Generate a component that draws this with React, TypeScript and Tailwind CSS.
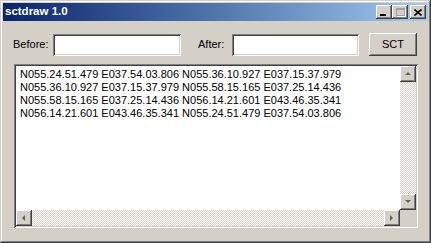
import React from "react";

const raised =
  "shadow-[inset_-1px_-1px_#404040,inset_1px_1px_#ffffff,inset_-2px_-2px_#808080,inset_2px_2px_#d4d0c8]";
const sunken =
  "shadow-[inset_1px_1px_#808080,inset_-1px_-1px_#ffffff,inset_2px_2px_#404040,inset_-2px_-2px_#d4d0c8]";

const lines = [
  "N055.24.51.479 E037.54.03.806 N055.36.10.927 E037.15.37.979",
  "N055.36.10.927 E037.15.37.979 N055.58.15.165 E037.25.14.436",
  "N055.58.15.165 E037.25.14.436 N056.14.21.601 E043.46.35.341",
  "N056.14.21.601 E043.46.35.341 N055.24.51.479 E037.54.03.806",
];

function Arrow({ dir }: { dir: "up" | "down" | "left" | "right" }) {
  const pts: Record<string, string> = {
    up: "1,5 4,2 7,5",
    down: "1,2 4,5 7,2",
    left: "5,1 2,4 5,7",
    right: "2,1 5,4 2,7",
  };
  return (
    <svg width="8" height="8" viewBox="0 0 8 8">
      <polygon points={pts[dir]} fill="#606060" />
    </svg>
  );
}

function ScrollBtn({ dir }: { dir: "up" | "down" | "left" | "right" }) {
  return (
    <div className={`w-[16px] h-[16px] shrink-0 bg-[#d4d0c8] flex items-center justify-center ${raised}`}>
      <Arrow dir={dir} />
    </div>
  );
}

const track =
  "bg-[repeating-conic-gradient(#d4d0c8_0_25%,#ffffff_0_50%)] bg-[length:2px_2px]";

export default function App() {
  return (
    <div
      className={`w-[431px] h-[243px] bg-[#d4d0c8] p-[3px] flex flex-col ${"shadow-[inset_-1px_-1px_#404040,inset_1px_1px_#d4d0c8,inset_-2px_-2px_#808080,inset_2px_2px_#ffffff]"}`}
      style={{ fontFamily: '"Liberation Sans", Arial, sans-serif' }}
    >
      {/* Title bar */}
      <div className="h-[18px] shrink-0 flex items-center bg-gradient-to-r from-[#0a246a] to-[#a6caf0] pl-[2px] pr-[2px]">
        <span className="text-white font-bold text-[11.5px] leading-none flex-1">sctdraw 1.0</span>
        <div className="flex items-center">
          <div className={`w-[16px] h-[14px] bg-[#d4d0c8] relative ${raised}`}>
            <div className="absolute left-[4px] top-[9px] w-[6px] h-[2px] bg-black" />
          </div>
          <div className={`w-[16px] h-[14px] bg-[#d4d0c8] relative ${raised}`}>
            <div className="absolute left-[4px] top-[3px] w-[9px] h-[8px] border border-[#a0a0a0] border-t-2 shadow-[1px_1px_#ffffff]" />
          </div>
          <div className={`w-[16px] h-[14px] ml-[2px] bg-[#d4d0c8] flex items-center justify-center ${raised}`}>
            <svg width="8" height="7" viewBox="0 0 8 7">
              <path d="M0.5 0.5 L7.5 6.5 M7.5 0.5 L0.5 6.5" stroke="#000" strokeWidth="1.6" />
            </svg>
          </div>
        </div>
      </div>

      {/* Input row */}
      <div className="mt-[12px] h-[23px] flex items-center text-[11px] text-black">
        <span className="ml-[10px] w-[40px]">Before:</span>
        <div className={`w-[128px] h-[22px] bg-white ${sunken}`} />
        <span className="ml-[17px] w-[34px]">After:</span>
        <div className={`w-[127px] h-[22px] bg-white ${sunken}`} />
        <div className={`ml-[10px] w-[48px] h-[23px] bg-[#d4d0c8] flex items-center justify-center ${raised}`}>
          SCT
        </div>
      </div>

      {/* Text area */}
      <div className={`mt-[8px] ml-[11px] w-[404px] h-[164px] p-[2px] bg-white ${sunken}`}>
        <div className="w-full h-full grid grid-cols-[1fr_16px] grid-rows-[1fr_16px]">
          <div className="pl-[4px] pt-[2px] text-[11px] leading-[13px] text-black whitespace-pre overflow-hidden">
            {lines.map((l) => (
              <div key={l}>{l}</div>
            ))}
          </div>
          <div className="flex flex-col">
            <ScrollBtn dir="up" />
            <div className={`flex-1 ${track}`} />
            <ScrollBtn dir="down" />
          </div>
          <div className="flex">
            <ScrollBtn dir="left" />
            <div className={`flex-1 ${track}`} />
            <ScrollBtn dir="right" />
          </div>
          <div className="bg-[#d4d0c8]" />
        </div>
      </div>
    </div>
  );
}
